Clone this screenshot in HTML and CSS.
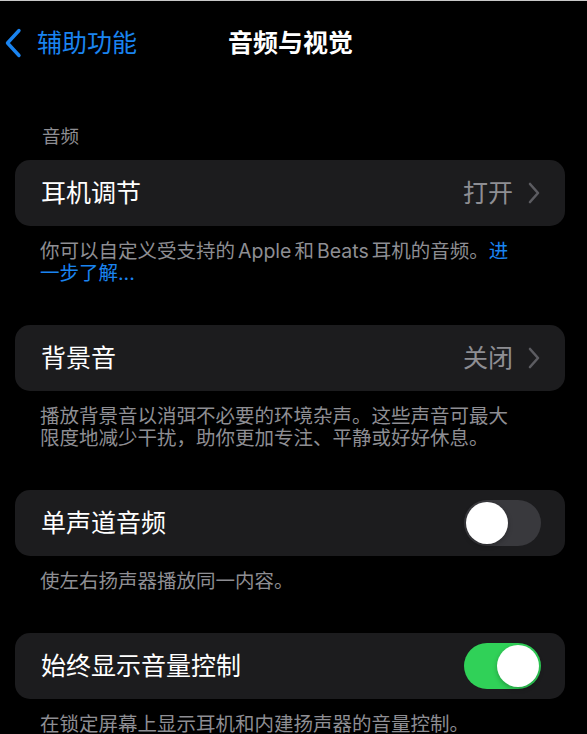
FILE: index.html
```html
<!DOCTYPE html>
<html lang="zh-CN">
<head>
<meta charset="utf-8">
<title>音频与视觉</title>
<link rel="stylesheet" href="styles.css">
</head>
<body>
<div class="screen">
  <header class="nav">
    <div class="nav-back">
      <svg class="back-chevron" viewBox="0 0 18 30" width="18" height="30" aria-hidden="true">
        <path d="M15 2.5 L3.5 15 L15 27.5" fill="none" stroke="#1a84f0" stroke-width="3.4" stroke-linecap="round" stroke-linejoin="round"/>
      </svg>
      <span class="back-label">辅助功能</span>
    </div>
    <div class="nav-title">音频与视觉</div>
    <div class="nav-spacer"></div>
  </header>

  <main class="content">
    <div class="section-header">音频</div>

    <div class="card">
      <div class="row">
        <span class="row-label">耳机调节</span>
        <span class="row-value">打开</span>
        <svg class="chevron" viewBox="0 0 12 22" width="12" height="22" aria-hidden="true">
          <path d="M2 2 L10 11 L2 20" fill="none" stroke="#5c5c61" stroke-width="2.6" stroke-linecap="round" stroke-linejoin="round"/>
        </svg>
      </div>
    </div>
    <p class="footer">你可以自定义受支持的<span class="latin">Apple</span>和<span class="latin">Beats</span>耳机的音频。<span class="link">进一步了解...</span></p>

    <div class="card">
      <div class="row">
        <span class="row-label">背景音</span>
        <span class="row-value">关闭</span>
        <svg class="chevron" viewBox="0 0 12 22" width="12" height="22" aria-hidden="true">
          <path d="M2 2 L10 11 L2 20" fill="none" stroke="#5c5c61" stroke-width="2.6" stroke-linecap="round" stroke-linejoin="round"/>
        </svg>
      </div>
    </div>
    <p class="footer">播放背景音以消弭不必要的环境杂声。这些声音可最大限度地减少干扰，助你更加专注、平静或好好休息。</p>

    <div class="card">
      <div class="row">
        <span class="row-label">单声道音频</span>
        <span class="toggle"><span class="knob"></span></span>
      </div>
    </div>
    <p class="footer">使左右扬声器播放同一内容。</p>

    <div class="card">
      <div class="row">
        <span class="row-label">始终显示音量控制</span>
        <span class="toggle on"><span class="knob"></span></span>
      </div>
    </div>
    <p class="footer">在锁定屏幕上显示耳机和内建扬声器的音量控制。</p>
  </main>
</div>
</body>
</html>
```

FILE: styles.css
```css
html, body {
  margin: 0;
  padding: 0;
  background: #000;
}

body {
  font-family: "Inter", "Noto Sans CJK SC", sans-serif;
  color: #fff;
  width: 587px;
  height: 734px;
  overflow: hidden;
}

.screen {
  border-top: 1px solid #c8c8c8;
}

.nav {
  height: 83px;
  display: grid;
  grid-template-columns: 1fr auto 1fr;
  align-items: center;
}

.nav-back {
  display: flex;
  align-items: center;
  gap: 15px;
  padding-left: 4px;
}

.back-chevron {
  display: block;
}

.back-label {
  font-size: 25px;
  line-height: 30px;
  color: #1a84f0;
}

.nav-title {
  font-size: 25px;
  line-height: 30px;
  font-weight: 600;
  color: #fff;
  margin-left: -6px;
}

.content {
  padding: 0 22px 0 15px;
}

.section-header {
  margin: 41px 0 13px 27px;
  font-size: 18.5px;
  line-height: 22px;
  color: #8e8e93;
}

.card {
  background: #1c1c1e;
  border-radius: 15px;
  width: 550px;
}

.row {
  height: 66px;
  display: flex;
  align-items: center;
  padding: 0 24px 0 26px;
}

.row-label {
  flex: 1;
  font-size: 25px;
  line-height: 30px;
  color: #fff;
}

.row-value {
  font-size: 25px;
  line-height: 30px;
  color: #8e8e93;
  margin-right: 15px;
}

.chevron {
  display: block;
  margin-right: 1px;
}

.footer {
  margin: 14px 0 41px 0;
  padding: 0 45px 0 25px;
  font-size: 19.5px;
  line-height: 22px;
  color: #8e8e93;
}

.latin {
  padding: 0 3px;
}

.link {
  color: #1a84f0;
}

.toggle {
  position: relative;
  width: 77px;
  height: 46px;
  border-radius: 23px;
  background: #39393d;
  flex: none;
}

.toggle.on {
  background: #30d158;
}

.knob {
  position: absolute;
  top: 2px;
  left: 2px;
  width: 42px;
  height: 42px;
  border-radius: 50%;
  background: #fff;
  box-shadow: 0 2px 5px rgba(0, 0, 0, 0.25);
}

.toggle.on .knob {
  left: 33px;
}
```
